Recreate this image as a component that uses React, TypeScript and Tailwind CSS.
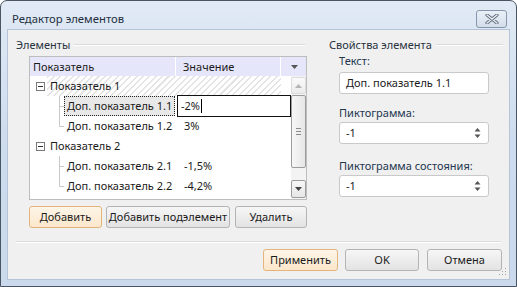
import React from "react";

const font = { fontFamily: '"Noto Sans", "Liberation Sans", sans-serif' };

function Btn({ children, w, focus }: { children: React.ReactNode; w: string; focus?: boolean }) {
  return (
    <div
      className={
        "h-[22px] flex items-center justify-center rounded-[3px] border text-[11px] text-[#1b1b1b] " +
        w +
        (focus
          ? " border-[#e3b47c] bg-gradient-to-b from-[#fdf5e8] to-[#fbe7cb]"
          : " border-[#b4b4b4] bg-gradient-to-b from-[#f6f6f6] to-[#e3e3e3]")
      }
    >
      {children}
    </div>
  );
}

function SpinBox({ value }: { value: string }) {
  return (
    <div className="h-[22px] w-[150px] rounded-[3px] border border-[#c9c9c9] bg-white flex items-center pl-[6px] pr-[7px] text-[#1b1b1b]">
      <span className="flex-1">{value}</span>
      <svg width="7" height="12" viewBox="0 0 7 12">
        <path d="M3.5 1 L6.5 4.5 L0.5 4.5 Z" fill="#555" />
        <path d="M3.5 11 L6.5 7.5 L0.5 7.5 Z" fill="#555" />
      </svg>
    </div>
  );
}

function Connector({ last }: { last?: boolean }) {
  return (
    <svg width="34" height="20" viewBox="0 0 34 20" className="shrink-0">
      <line x1="29.5" y1="0" x2="29.5" y2={last ? 10.5 : 20} stroke="#c9c9c9" />
      <line x1="29.5" y1="10.5" x2="34" y2="10.5" stroke="#c9c9c9" />
    </svg>
  );
}

function MinusBox() {
  return (
    <div className="ml-[6px] w-[9px] h-[9px] border border-[#7a7a7a] bg-white flex items-center justify-center shrink-0">
      <div className="w-[5px] h-px bg-[#333]" />
    </div>
  );
}

function ChildRow({ name, value, last }: { name: string; value: string; last?: boolean }) {
  return (
    <div className="h-[20px] flex items-center">
      <Connector last={last} />
      <div className="w-[111px] pl-[3px] leading-[20px]">{name}</div>
      <div className="pl-[9px]">{value}</div>
    </div>
  );
}

function ParentRow({ name, hatch }: { name: string; hatch?: boolean }) {
  return (
    <div className="h-[20px] flex items-center">
      <MinusBox />
      <div
        className={
          "ml-[2px] w-[234px] h-[20px] pl-[3px] leading-[20px] " +
          (hatch
            ? "bg-[repeating-linear-gradient(135deg,#e4e4e4_0px,#e4e4e4_1.5px,#ffffff_1.5px,#ffffff_4.5px)]"
            : "")
        }
      >
        {name}
      </div>
    </div>
  );
}

export default function App() {
  return (
    <div className="w-[517px] h-[287px] bg-white overflow-hidden whitespace-nowrap" style={font}>
      <div className="w-[517px] h-[287px] rounded-t-[7px] border border-[#4a5563] bg-gradient-to-b from-[#e1eaf5] via-[#cddcee] to-[#cad9eb] flex flex-col">
        {/* Title bar */}
        <div className="h-[29px] flex items-start pt-[9px] pl-[11px] pr-[9px]">
          <div className="flex-1 text-[11.3px] leading-[18px] text-[#23303f]">Редактор элементов</div>
          <div className="w-[31px] h-[18px] rounded-[3px] border border-[#8797ab] bg-gradient-to-b from-[#e9eff7] to-[#d3deeb] flex items-center justify-center">
            <svg width="14" height="10" viewBox="0 0 14 10">
              <path d="M2 1 L12 9 M12 1 L2 9" stroke="#5e6b7a" strokeWidth="3.2" strokeLinecap="round" />
              <path d="M2 1 L12 9 M12 1 L2 9" stroke="#eef2f7" strokeWidth="1.4" strokeLinecap="round" />
            </svg>
          </div>
        </div>

        {/* Content */}
        <div className="mx-[7px] h-[249px] bg-[#f0f0f0] shadow-[0_0_0_1px_#b5c4d6] flex flex-col text-[11px] text-[#1b1b1b]">
          <div className="flex pt-[7px]">
            {/* Left group */}
            <div className="ml-[8px] w-[291px] flex flex-col">
              <div className="h-[16px] flex items-center gap-[4px]">
                <span className="leading-[16px] text-[#2a3340]">Элементы</span>
                <div className="flex-1 mr-[2px] h-[2px] border-t border-[#dadada] border-b border-b-white" />
              </div>
              <div className="ml-[13px] mt-[3px] w-[278px] h-[144px] border border-[#bdbdbd] bg-white flex flex-col">
                {/* Header */}
                <div className="h-[19px] flex bg-[#e6e6fa] text-[#1b1b1b]">
                  <div className="w-[146px] pl-[3px] leading-[19px] border-r border-r-white">Показатель</div>
                  <div className="w-[105px] pl-[7px] leading-[19px] border-r border-r-white">Значение</div>
                  <div className="flex-1 flex items-center justify-center pl-[1px]">
                    <svg width="7" height="4" viewBox="0 0 7 4">
                      <path d="M0 0 L7 0 L3.5 4 Z" fill="#555" />
                    </svg>
                  </div>
                </div>
                {/* Body */}
                <div className="flex flex-1">
                  <div className="w-[261px] flex flex-col">
                    <ParentRow name="Показатель 1" hatch />
                    <div className="h-[20px] flex items-center">
                      <Connector />
                      <div className="w-[111px] h-[20px] pl-[2px] leading-[18px] bg-[#e8e8e8] border border-dotted border-[#222]">
                        Доп. показатель 1.1
                      </div>
                      <div className="ml-[2px] -my-px w-[114px] h-[22px] border border-[#111] bg-white flex items-center pl-[3px]">
                        <span>-2%</span>
                        <span className="w-px h-[14px] bg-black ml-[1px]" />
                      </div>
                    </div>
                    <ChildRow name="Доп. показатель 1.2" value="3%" last />
                    <ParentRow name="Показатель 2" />
                    <ChildRow name="Доп. показатель 2.1" value="-1,5%" />
                    <ChildRow name="Доп. показатель 2.2" value="-4,2%" last />
                  </div>
                  {/* Scrollbar */}
                  <div className="w-[15px] bg-[#f3f3f3] flex flex-col pt-[1px] pb-[1px]">
                    <div className="h-[17px] rounded-[2px] border border-[#dcdcdc] bg-gradient-to-b from-[#fafafa] to-[#ececec] flex items-center justify-center">
                      <svg width="7" height="4" viewBox="0 0 7 4">
                        <path d="M3.5 0 L7 4 L0 4 Z" fill="#b5b5b5" />
                      </svg>
                    </div>
                    <div className="mt-[1px] h-[73px] rounded-[2px] border border-[#9d9d9d] bg-gradient-to-r from-[#f7f7f7] to-[#e6e6e6] flex flex-col items-center justify-center gap-[2px]">
                      <div className="w-[5px] h-px bg-[#8a8a8a]" />
                      <div className="w-[5px] h-px bg-[#8a8a8a]" />
                      <div className="w-[5px] h-px bg-[#8a8a8a]" />
                    </div>
                    <div className="flex-1" />
                    <div className="h-[18px] rounded-[2px] border border-[#9d9d9d] bg-gradient-to-b from-[#f8f8f8] to-[#e6e6e6] flex items-center justify-center">
                      <svg width="7" height="4" viewBox="0 0 7 4">
                        <path d="M0 0 L7 0 L3.5 4 Z" fill="#444" />
                      </svg>
                    </div>
                  </div>
                </div>
              </div>
              <div className="ml-[13px] mt-[6px] flex">
                <Btn w="w-[73px]" focus>
                  Добавить
                </Btn>
                <div className="ml-[4px]">
                  <Btn w="w-[124px]">Добавить подэлемент</Btn>
                </div>
                <div className="ml-[5px]">
                  <Btn w="w-[72px]">Удалить</Btn>
                </div>
              </div>
            </div>

            {/* Right group */}
            <div className="ml-[22px] w-[174px] flex flex-col">
              <div className="h-[16px] flex items-center gap-[4px]">
                <span className="leading-[16px] text-[#2a3340]">Свойства элемента</span>
                <div className="flex-1 h-[2px] border-t border-[#dadada] border-b border-b-white" />
              </div>
              <div className="pl-[10px] flex flex-col">
                <div className="leading-[16px] text-[#23364f]">Текст:</div>
                <div className="mt-[3px] h-[22px] w-[150px] rounded-[3px] border border-[#c9c9c9] bg-white flex items-center pl-[6px]">
                  Доп. показатель 1.1
                </div>
                <div className="mt-[11px] leading-[16px] text-[#23364f]">Пиктограмма:</div>
                <div className="mt-[1px]">
                  <SpinBox value="-1" />
                </div>
                <div className="mt-[14px] leading-[16px] text-[#23364f]">Пиктограмма состояния:</div>
                <div className="mt-[1px]">
                  <SpinBox value="-1" />
                </div>
              </div>
            </div>
          </div>

          <div className="flex-1" />
          <div className="mx-[8px] h-[2px] border-t border-[#dcdcdc] border-b border-b-white" />
          <div className="mt-[6px] mb-[8px] flex justify-end pr-[7px] relative">
            <Btn w="w-[75px]" focus>
              Применить
            </Btn>
            <div className="ml-[7px]">
              <Btn w="w-[74px]">OK</Btn>
            </div>
            <div className="ml-[8px]">
              <Btn w="w-[75px]">Отмена</Btn>
            </div>
            <svg className="absolute right-[2px] bottom-[-5px]" width="8" height="8" viewBox="0 0 8 8">
              <rect x="6" y="0" width="1" height="1" fill="#a8a8a8" />
              <rect x="3" y="3" width="1" height="1" fill="#a8a8a8" />
              <rect x="6" y="3" width="1" height="1" fill="#a8a8a8" />
              <rect x="0" y="6" width="1" height="1" fill="#a8a8a8" />
              <rect x="3" y="6" width="1" height="1" fill="#a8a8a8" />
              <rect x="6" y="6" width="1" height="1" fill="#a8a8a8" />
            </svg>
          </div>
        </div>
        <div className="flex-1" />
      </div>
    </div>
  );
}
